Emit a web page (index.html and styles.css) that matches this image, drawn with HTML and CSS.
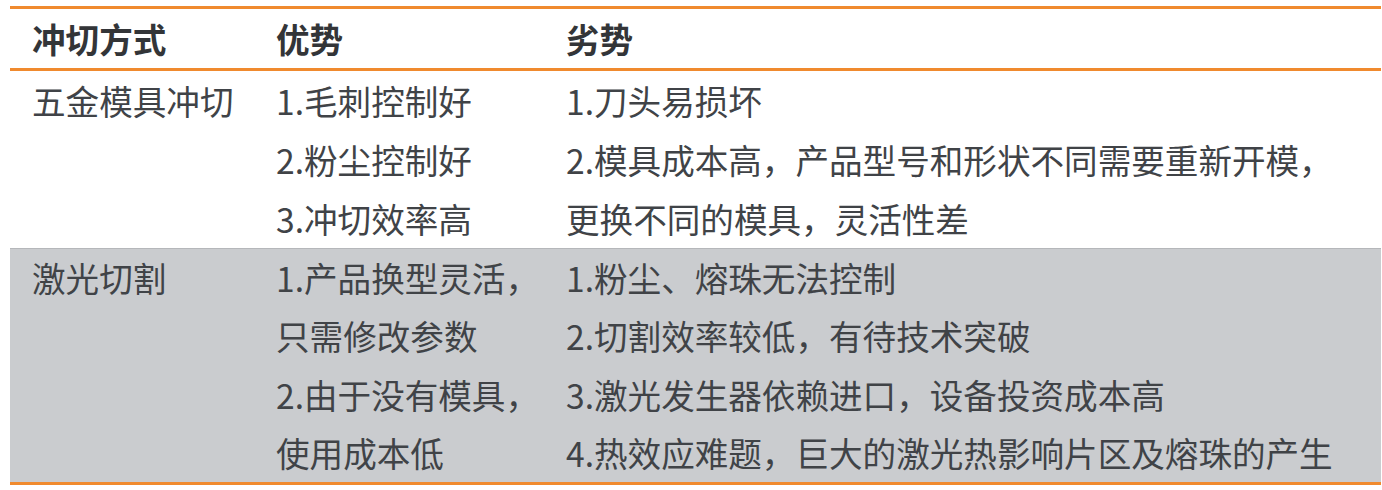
FILE: index.html
```html
<!DOCTYPE html>
<html lang="zh">
<head>
<meta charset="utf-8">
<link rel="stylesheet" href="styles.css">
</head>
<body>
<div class="tbl">
  <div class="row head">
    <div class="c1">冲切方式</div>
    <div class="c2">优势</div>
    <div class="c3">劣势</div>
  </div>
  <div class="row body first">
    <div class="c1">五金模具冲切</div>
    <div class="c2">
      <div>1.毛刺控制好</div>
      <div>2.粉尘控制好</div>
      <div>3.冲切效率高</div>
    </div>
    <div class="c3">
      <div>1.刀头易损坏</div>
      <div>2.模具成本高，产品型号和形状不同需要重新开模，</div>
      <div>更换不同的模具，灵活性差</div>
    </div>
  </div>
  <div class="row body grey">
    <div class="c1">激光切割</div>
    <div class="c2">
      <div>1.产品换型灵活，</div>
      <div>只需修改参数</div>
      <div>2.由于没有模具，</div>
      <div>使用成本低</div>
    </div>
    <div class="c3">
      <div>1.粉尘、熔珠无法控制</div>
      <div>2.切割效率较低，有待技术突破</div>
      <div>3.激光发生器依赖进口，设备投资成本高</div>
      <div>4.热效应难题，巨大的激光热影响片区及熔珠的产生</div>
    </div>
  </div>
</div>
</body>
</html>
```

FILE: styles.css
```css
html, body {
  margin: 0;
  padding: 0;
  background: #ffffff;
}
body {
  font-family: "Noto Sans CJK SC", "Noto Sans", sans-serif;
  color: #404347;
  font-size: 33.6px;
}
.tbl {
  margin: 6px 1px 0 10px;
  border-top: 3px solid #f08a2e;
  border-bottom: 3px solid #f08a2e;
}
.row {
  display: grid;
  grid-template-columns: 256px 290px 1fr;
}
.c1 { padding-left: 22px; }
.c2 { padding-left: 10px; }
.c3 { padding-left: 10px; }
.head {
  height: 59px;
  line-height: 59px;
  font-weight: bold;
  color: #333538;
  border-bottom: 3px solid #f08a2e;
}
.body.first {
  line-height: 59px;
  height: 177px;
}
.body.grey {
  background: #cacccf;
  border-top: 1px solid #b5b7ba;
  line-height: 58.25px;
  height: 233px;
}
```
